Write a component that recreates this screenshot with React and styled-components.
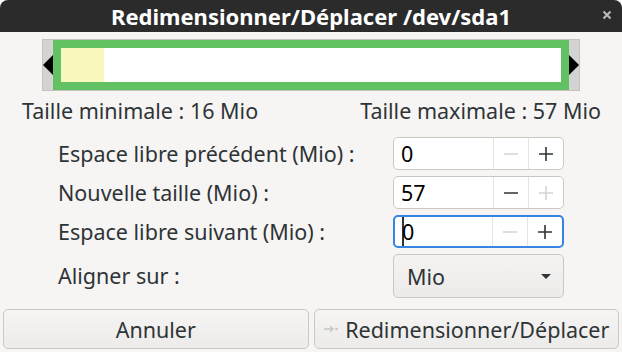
import React from 'react';
import styled, { createGlobalStyle } from 'styled-components';

const GlobalStyle = createGlobalStyle`
  html, body {
    margin: 0;
    padding: 0;
    background: #ffffff;
  }
  body {
    font-family: "Noto Sans", "Open Sans", sans-serif;
    font-size: 21.5px;
    color: #2e3436;
  }
`;

const rows = [
  { id: 'before', label: 'Espace libre précédent (Mio) :', value: '0', minus: false, plus: true },
  { id: 'size', label: 'Nouvelle taille (Mio) :', value: '57', minus: true, plus: false },
  { id: 'after', label: 'Espace libre suivant (Mio) :', value: '0', minus: false, plus: true, focused: true },
];

const App = () => (
  <>
    <GlobalStyle />
    <Window>
      <TitleBar>
        <Title>Redimensionner/Déplacer /dev/sda1</Title>
        <CloseButton>
          <svg width="10" height="10" viewBox="0 0 10 10">
            <path d="M1.5 1.5 L8.5 8.5 M8.5 1.5 L1.5 8.5" stroke="#bdbdbd" strokeWidth="2" />
          </svg>
        </CloseButton>
      </TitleBar>

      <Body>
        <PartitionBar>
          <Handle>
            <Arrow dir="left" />
          </Handle>
          <Partition>
            <Used style={{ width: '43px' }} />
          </Partition>
          <Handle>
            <Arrow dir="right" />
          </Handle>
        </PartitionBar>

        <Limits>
          <span>Taille minimale : 16 Mio</span>
          <span>Taille maximale : 57 Mio</span>
        </Limits>

        <Form>
          {rows.map(({ id, label, value, minus, plus, focused }) => (
            <React.Fragment key={id}>
              <Label>{label}</Label>
              <SpinBox focused={focused}>
                <Entry>
                  {focused && <Cursor />}
                  {value}
                </Entry>
                <SpinButton active={minus}>
                  <svg width="16" height="16" viewBox="0 0 16 16">
                    <path d="M1 8 H15" stroke="currentColor" strokeWidth="1.6" />
                  </svg>
                </SpinButton>
                <SpinButton active={plus}>
                  <svg width="16" height="16" viewBox="0 0 16 16">
                    <path d="M1 8 H15 M8 1 V15" stroke="currentColor" strokeWidth="1.6" />
                  </svg>
                </SpinButton>
              </SpinBox>
            </React.Fragment>
          ))}
          <Label>Aligner sur :</Label>
          <Select>
            <span>Mio</span>
            <DropArrow />
          </Select>
        </Form>

        <Actions>
          <Button>Annuler</Button>
          <Button>
            <svg width="16" height="10" viewBox="0 0 16 10">
              <path d="M1 5 H10 M7 2 L10 5 L7 8" stroke="#c4c6c8" strokeWidth="1.3" fill="none" />
              <circle cx="13.5" cy="5" r="1.3" fill="#c4c6c8" />
            </svg>
            Redimensionner/Déplacer
          </Button>
        </Actions>
      </Body>
    </Window>
  </>
);

const Window = styled.div`
  width: 622px;
  height: 352px;
  display: flex;
  flex-direction: column;
  background: #f6f5f4;
  border-radius: 8px 8px 0 0;
  overflow: hidden;
`;

const TitleBar = styled.div`
  height: 32px;
  flex: none;
  display: flex;
  align-items: center;
  justify-content: center;
  position: relative;
  background: #2b2b2b;
`;

const Title = styled.div`
  color: #ffffff;
  font-weight: 700;
  font-size: 22px;
  line-height: 32px;
`;

const CloseButton = styled.div`
  position: absolute;
  right: 10px;
  top: 10px;
  display: flex;
`;

const Body = styled.div`
  flex: 1;
  display: flex;
  flex-direction: column;
`;

const PartitionBar = styled.div`
  margin: 7px 0 0 42px;
  width: 536px;
  height: 50px;
  display: flex;
  background: #d3d3d3;
  border: 1px solid #c6c3bf;
`;

const Handle = styled.div`
  width: 10px;
  display: flex;
  align-items: center;
  justify-content: center;
`;

const Arrow = styled.div`
  width: 0;
  height: 0;
  border-top: 10px solid transparent;
  border-bottom: 10px solid transparent;
  ${p => (p.dir === 'left' ? 'border-right: 10px solid #000;' : 'border-left: 10px solid #000;')}
`;

const Partition = styled.div`
  flex: 1;
  display: flex;
  background: #ffffff;
  border: 8px solid #62c162;
`;

const Used = styled.div`
  background: #f8f8bc;
`;

const Limits = styled.div`
  display: flex;
  justify-content: space-between;
  margin-top: 6px;
  padding: 0 21px 0 22px;
  line-height: 28px;
`;

const Form = styled.div`
  display: grid;
  grid-template-columns: 335px 171px;
  grid-template-rows: 33px 33px 33px 44px;
  row-gap: 6px;
  margin-top: 12px;
  padding-left: 58px;
`;

const Label = styled.div`
  align-self: center;
  line-height: 28px;
`;

const SpinBox = styled.div`
  display: flex;
  background: #ffffff;
  border: ${p => (p.focused ? '2px solid #3584e4' : '1px solid #cdc7c2')};
  border-radius: 5px;
  overflow: hidden;
`;

const Entry = styled.div`
  flex: 1;
  display: flex;
  align-items: center;
  padding-left: 7px;
  color: #000;
`;

const Cursor = styled.span`
  display: inline-block;
  width: 2px;
  height: 29px;
  margin-right: -2px;
  background: #2e3436;
`;

const SpinButton = styled.div`
  width: 34px;
  display: flex;
  align-items: center;
  justify-content: center;
  border-left: 1px solid #e6e4e2;
  color: ${p => (p.active ? '#2e3436' : '#d4d4d2')};
`;

const Select = styled.div`
  display: flex;
  align-items: center;
  justify-content: space-between;
  padding: 0 12px 0 13px;
  border: 1px solid #cdc7c2;
  border-radius: 5px;
  background: linear-gradient(#f4f3f2, #edebe9);
`;

const DropArrow = styled.div`
  width: 0;
  height: 0;
  border-left: 5px solid transparent;
  border-right: 5px solid transparent;
  border-top: 5px solid #2e3436;
`;

const Actions = styled.div`
  display: flex;
  gap: 5px;
  margin: 11px 3px 0;
`;

const Button = styled.div`
  flex: 1;
  height: 38px;
  display: flex;
  align-items: center;
  justify-content: center;
  gap: 6px;
  border: 1px solid #cdc7c2;
  border-radius: 5px;
  background: linear-gradient(#f6f5f4, #edebe9);
`;

export default App;
